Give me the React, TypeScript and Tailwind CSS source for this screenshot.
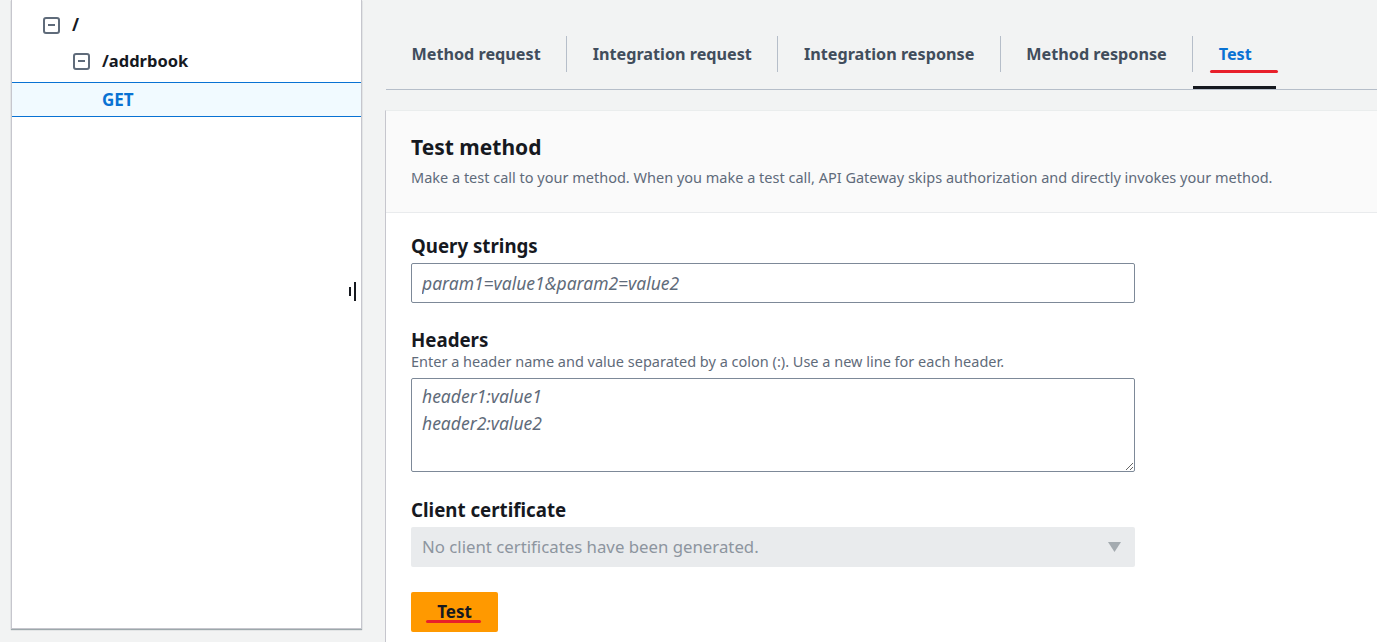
import React from "react";

function MinusBox() {
  return (
    <span className="flex h-[17px] w-[17px] items-center justify-center rounded-[3px] border-2 border-[#5f6b7a]">
      <span className="h-[2px] w-[7px] bg-[#5f6b7a]" />
    </span>
  );
}

const tabs = ["Method request", "Integration request", "Integration response", "Method response"];

export default function App() {
  return (
    <div
      className="flex h-[642px] w-full overflow-hidden bg-[#f2f3f3] text-[#16191f]"
      style={{ fontFamily: '"Noto Sans", "Open Sans", Arial, sans-serif' }}
    >
      {/* Left tree panel */}
      <div className="ml-[11px] w-[351px] shrink-0">
        <div className="relative h-[629px] border-x border-b border-[#c6c6cd] bg-white shadow-[0_1px_1px_rgba(0,28,36,0.35)]">
          <div className="pt-[7px]">
            <div className="flex h-[36px] items-center pl-[31px]">
              <MinusBox />
              <span className="ml-[12px] text-[17px] font-bold">/</span>
            </div>
            <div className="flex h-[36px] items-center pl-[61px]">
              <MinusBox />
              <span className="ml-[12px] text-[16.5px] font-bold">/addrbook</span>
            </div>
            <div className="mt-[3px] flex h-[35px] items-center border-y border-[#0972d3] bg-[#f1faff] pl-[90px]">
              <span className="text-[17px] font-bold text-[#0972d3]">GET</span>
            </div>
          </div>
          {/* resize handle */}
          <div className="absolute left-[337px] top-[287px] h-[9px] w-[2px] bg-[#16191f]" />
          <div className="absolute left-[342px] top-[282px] h-[19px] w-[2px] bg-[#16191f]" />
        </div>
      </div>

      {/* Right side */}
      <div className="ml-[23px] flex min-w-0 flex-1 flex-col">
        {/* Tabs */}
        <div className="ml-px flex h-[90px] shrink-0 border-b border-[#b6bec9]">
          {tabs.map((t, i) => (
            <div key={t} className="h-full">
              <div
                className={
                  "mt-[36px] flex h-[36px] items-center px-[25.5px] text-[16.2px] font-bold text-[#414d5c] " +
                  (i > 0 ? "border-l border-[#b6bec9]" : "")
                }
              >
                {t}
              </div>
            </div>
          ))}
          <div className="relative h-full">
            <div className="mt-[36px] flex h-[36px] items-center border-l border-[#b6bec9] px-[25.5px] text-[16.2px] font-bold text-[#0972d3]">
              Test
            </div>
            <div className="absolute left-[18px] top-[70px] h-[3px] w-[68px] rounded-full bg-[#e8202a]" />
            <div className="absolute bottom-0 left-px right-[1px] h-[3px] bg-[#16191f]" />
          </div>
        </div>

        {/* Content panel */}
        <div className="mt-[20px] flex-1 border-l border-t border-[#c6c6cd] border-t-[#eaeded] bg-white">
          <div className="border-b border-[#e9ebed] bg-[#fafafa] pb-[25px] pl-[25px] pt-[24px]">
            <h2 className="text-[21px] font-bold leading-[25px]">Test method</h2>
            <p className="mt-[7px] text-[14.5px] leading-[20px] text-[#5f6b7a]">
              Make a test call to your method. When you make a test call, API Gateway skips authorization and directly invokes your method.
            </p>
          </div>

          <div className="w-[749px] pl-[25px] pt-[22px]">
            <div className="text-[18.7px] font-bold leading-[22px]">Query strings</div>
            <input
              className="mt-[6px] block h-[40px] w-[724px] rounded-[2px] border border-[#7d8998] bg-white px-[10px] text-[17.5px] outline-none placeholder:italic placeholder:text-[#5f6b7a]"
              placeholder="param1=value1&param2=value2"
              readOnly
            />

            <div className="mt-[26px] text-[18.7px] font-bold leading-[22px]">Headers</div>
            <div className="text-[14.5px] leading-[20px] text-[#5f6b7a]">
              Enter a header name and value separated by a colon (:). Use a new line for each header.
            </div>
            <textarea
              className="mt-[7px] block h-[94px] w-[724px] rounded-[2px] border border-[#7d8998] bg-white px-[10px] pt-[4px] text-[17.5px] leading-[27px] outline-none placeholder:italic placeholder:text-[#5f6b7a]"
              placeholder={"header1:value1\nheader2:value2"}
              readOnly
            />

            <div className="mt-[27px] text-[18.7px] font-bold leading-[22px]">Client certificate</div>
            <div className="mt-[6px] flex h-[40px] w-[724px] items-center justify-between rounded-[2px] bg-[#e9ebed] pl-[11px] pr-[14px]">
              <span className="text-[16.8px] text-[#8d959f]">No client certificates have been generated.</span>
              <svg width="13" height="10" viewBox="0 0 13 10">
                <polygon points="0,0 13,0 6.5,10" fill="#a4abb0" />
              </svg>
            </div>

            <div className="relative mt-[25px] inline-flex h-[40px] w-[87px] items-center justify-center rounded-[2px] bg-[#ff9900] text-[17px] font-bold text-[#16191f]">
              Test
              <div className="absolute left-[15px] top-[28px] h-[3px] w-[55px] rounded-full bg-[#e8202a]" />
            </div>
          </div>
        </div>
      </div>
    </div>
  );
}
